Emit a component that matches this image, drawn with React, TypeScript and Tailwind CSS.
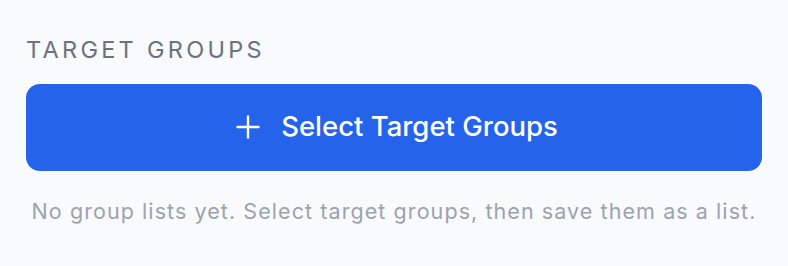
import React from "react";
import { Plus } from "lucide-react";

const TargetGroups = () => {
  return (
    <div className="px-[26px] pt-[38px]">
      <h3 className="text-[23.5px] leading-none font-normal uppercase tracking-[0.14em] text-[#6b7280]">
        Target Groups
      </h3>
      <button
        type="button"
        className="mt-[22px] w-full h-[87px] flex items-center justify-center gap-[15px] rounded-[14px] bg-[#2563eb] text-white text-[27.5px] font-medium"
      >
        <Plus className="w-[36px] h-[36px]" strokeWidth={1.6} />
        Select Target Groups
      </button>
      <p className="mt-[30px] text-center text-[21.5px] leading-none tracking-[0.05em] text-[#9ca3af]">
        No group lists yet. Select target groups, then save them as a list.
      </p>
    </div>
  );
};

export default function App() {
  return (
    <div
      className="w-[788px] h-[266px] bg-[#f9fafb]"
      style={{ fontFamily: "Inter, 'Noto Sans', sans-serif" }}
    >
      <TargetGroups />
    </div>
  );
}
